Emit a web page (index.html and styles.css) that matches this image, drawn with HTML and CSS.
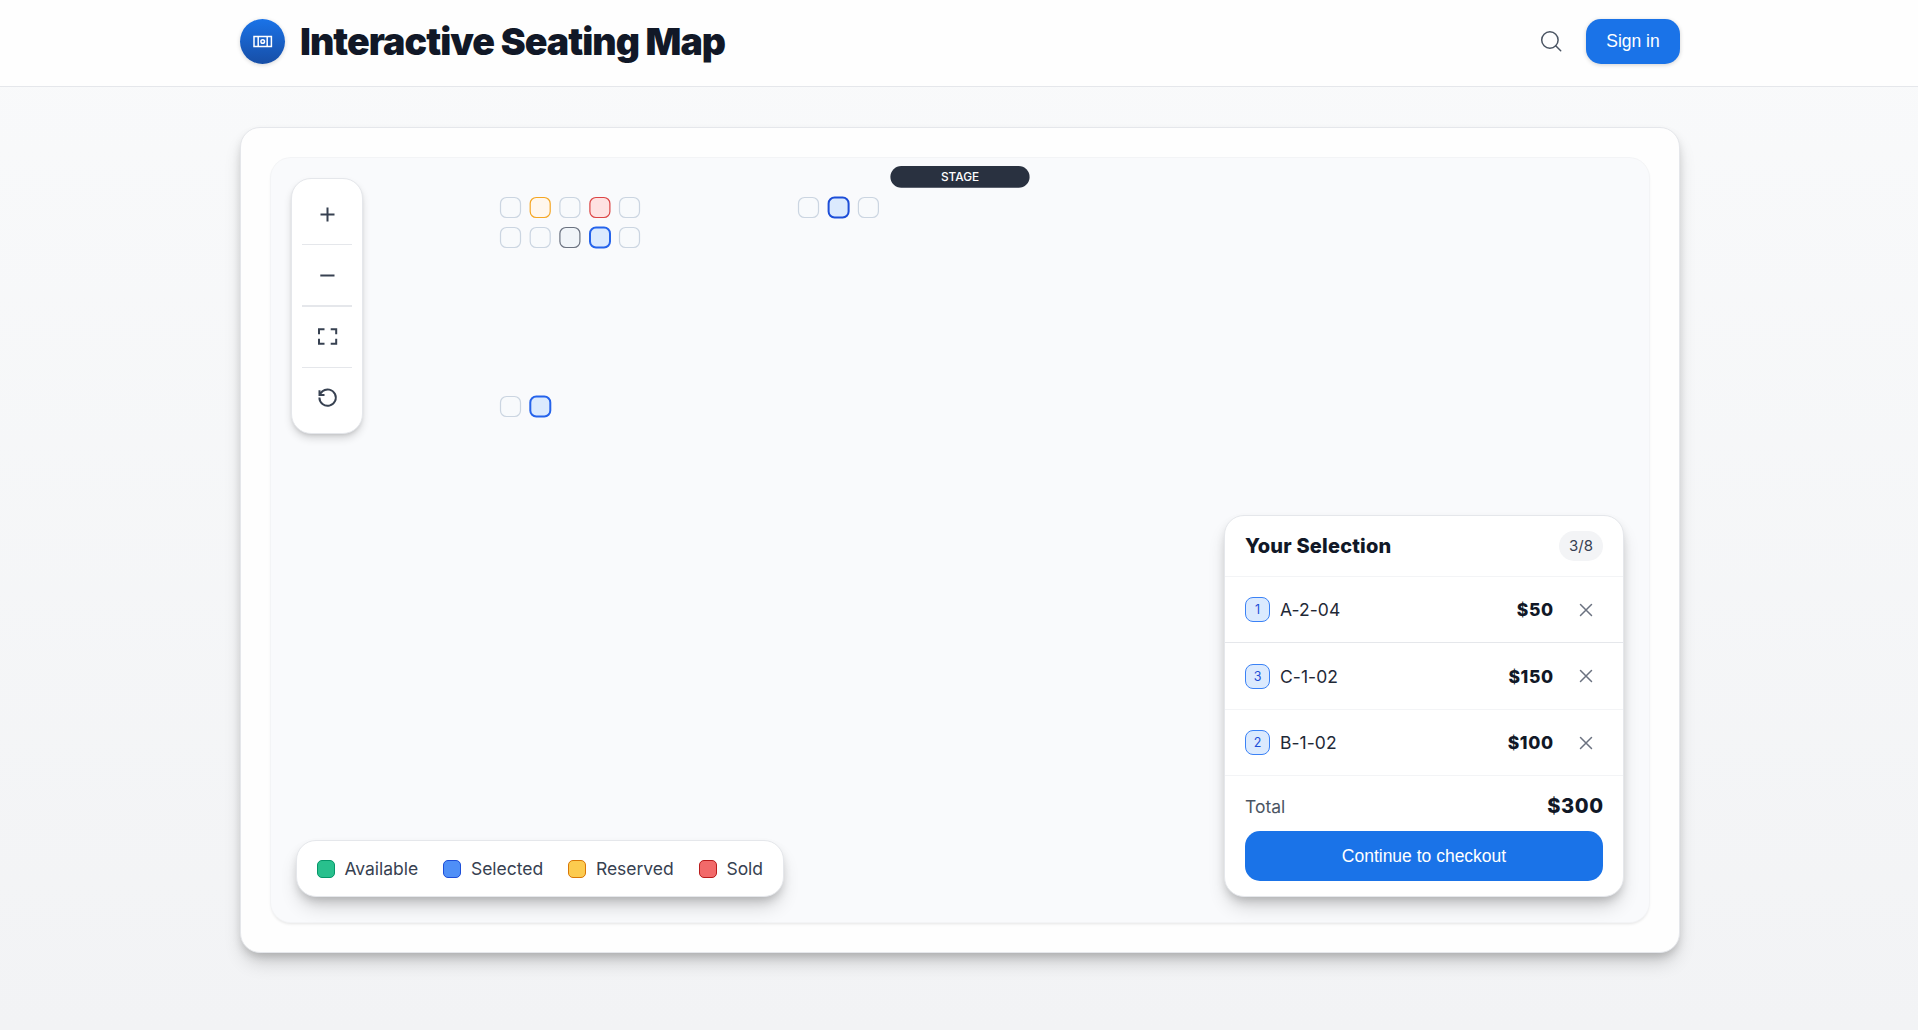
FILE: index.html
```html
<!DOCTYPE html>
<html lang="en">
<head>
<meta charset="utf-8">
<title>Interactive Seating Map</title>
<link rel="stylesheet" href="styles.css">
</head>
<body>
<header class="header">
  <div class="header-inner">
    <div class="logo">
      <svg width="20" height="20" viewBox="0 0 20 20" fill="none" stroke="#fff" stroke-width="1.5"><rect x="1" y="4.5" width="17.4" height="10"/><path d="M5.2 4.5v10M14.2 4.5v10"/><circle cx="9.7" cy="9.5" r="1.8"/></svg>
    </div>
    <h1 class="title">Interactive Seating Map</h1>
    <div class="actions">
      <svg width="22" height="22" viewBox="0 0 22 22" fill="none" stroke="#4b5563" stroke-width="1.5" stroke-linecap="round"><circle cx="9.9" cy="9" r="8.2"/><path d="M15.7 14.8l5 5"/></svg>
      <button class="button sign-in">Sign in</button>
    </div>
  </div>
</header>
<main class="card">
  <section class="map">
    <svg class="seats" width="1378" height="764" viewBox="271 158 1378 764">
      <g fill="#f8fafc" stroke="#cbd5e1" stroke-width="1.2">
        <rect x="500.5" y="197.5" width="20" height="20" rx="6"/>
        <rect x="559.9" y="197.5" width="20" height="20" rx="6"/>
        <rect x="619.5" y="197.5" width="20" height="20" rx="6"/>
        <rect x="500.5" y="227.5" width="20" height="20" rx="6"/>
        <rect x="530.2" y="227.5" width="20" height="20" rx="6"/>
        <rect x="619.5" y="227.5" width="20" height="20" rx="6"/>
        <rect x="798.5" y="197.5" width="20" height="20" rx="6"/>
        <rect x="858.4" y="197.5" width="20" height="20" rx="6"/>
        <rect x="500.5" y="396.5" width="20" height="20" rx="6"/>
      </g>
      <rect x="530.2" y="197.5" width="20" height="20" rx="6" fill="#fff7ed" stroke="#f5a623" stroke-width="1.2"/>
      <rect x="589.9" y="197.5" width="20" height="20" rx="6" fill="#fee2e2" stroke="#dc4545" stroke-width="1.2"/>
      <rect x="559.9" y="227.5" width="20" height="20" rx="6" fill="#f1f5f9" stroke="#6b7280" stroke-width="1.2"/>
      <g fill="#dbeafe" stroke="#2563eb" stroke-width="2">
        <rect x="590" y="227.5" width="20" height="20" rx="6"/>
        <rect x="530.3" y="396.5" width="20" height="20" rx="6"/>
        <rect x="828.6" y="197.5" width="20" height="20" rx="6" stroke="#1d4ed8"/>
      </g>
      <rect x="890.4" y="166" width="139.2" height="21.8" rx="10.9" fill="#293140"/>
      <text class="stage" x="960" y="181" text-anchor="middle">STAGE</text>
    </svg>
    <nav class="zoom panel">
      <button class="tool"><svg width="24" height="24" viewBox="0 0 24 24"><path d="M12.5 5.5v14M5.5 12.5h14"/></svg></button>
      <i class="divider"></i>
      <button class="tool"><svg width="24" height="24" viewBox="0 0 24 24"><path d="M5.3 12.5h14.2"/></svg></button>
      <i class="divider wide"></i>
      <button class="tool"><svg width="24" height="24" viewBox="0 0 24 24"><path d="M4 9.2V4.3h5.5M15.7 4.3h5.5v4.9M21.2 13.8v4.9h-5.5M9.5 18.7H4v-4.9"/></svg></button>
      <i class="divider"></i>
      <button class="tool"><svg width="24" height="24" viewBox="0 0 24 24"><path d="M4.4 11.6a8.2 8.2 0 1 0 3-6.3L4.5 8.6M4.5 4.2v4.8h5"/></svg></button>
    </nav>
    <div class="legend panel">
      <span class="key"><i class="swatch available"></i>Available</span>
      <span class="key"><i class="swatch selected"></i>Selected</span>
      <span class="key"><i class="swatch reserved"></i>Reserved</span>
      <span class="key"><i class="swatch sold"></i>Sold</span>
    </div>
    <aside class="selection panel">
      <div class="selection-head"><h2>Your Selection</h2><span class="count">3/8</span></div>
      <div class="row first"><span class="tier">1</span><span class="seat">A-2-04</span><b>$50</b><svg class="remove" width="14" height="14" viewBox="0 0 14 14"><path d="M1.5 1.5l11 11M12.5 1.5l-11 11"/></svg></div>
      <div class="row"><span class="tier">3</span><span class="seat">C-1-02</span><b>$150</b><svg class="remove" width="14" height="14" viewBox="0 0 14 14"><path d="M1.5 1.5l11 11M12.5 1.5l-11 11"/></svg></div>
      <div class="row last"><span class="tier">2</span><span class="seat">B-1-02</span><b>$100</b><svg class="remove" width="14" height="14" viewBox="0 0 14 14"><path d="M1.5 1.5l11 11M12.5 1.5l-11 11"/></svg></div>
      <div class="checkout">
        <div class="total"><span>Total</span><strong>$300</strong></div>
        <button class="button continue">Continue to checkout</button>
      </div>
    </aside>
  </section>
</main>
</body>
</html>
```

FILE: styles.css
```css
* { box-sizing: border-box; }
body {
  margin: 0;
  height: 1030px;
  overflow: hidden;
  background: linear-gradient(#f9fafb, #f2f3f5);
  font-family: Inter, sans-serif;
  font-size: 17.5px;
  color: #111827;
}
button { border: 0; padding: 0; }
.header { height: 87px; background: #fefefe; border-bottom: 1px solid #e5e7eb; padding-left: 240px; }
.header-inner { width: 1440px; height: 83px; display: flex; align-items: center; }
.logo {
  width: 45px; height: 45px; border-radius: 50%;
  display: flex; align-items: center; justify-content: center;
  background: linear-gradient(#1a73e8, #174ea6);
  box-shadow: 0 1px 4px rgba(0,0,0,.16);
}
.title { margin: 0 0 0 15px; font-size: 37.5px; line-height: 45px; font-weight: 900; letter-spacing: -0.97px; white-space: nowrap; }
.actions { margin-left: auto; display: flex; align-items: center; gap: 24px; }
.button { font: 17.5px "Liberation Sans", Arial, sans-serif; color: #fff; background: #1a73e8; border-radius: 15px; }
.sign-in { width: 94px; height: 45px; box-shadow: 0 1px 4px rgba(0,0,0,.18); }
.card {
  width: 1440px; height: 826px; margin: 40px 0 0 240px; padding: 30px;
  border: 1px solid #e5e7eb; border-radius: 20px; background: #fefefe;
  box-shadow: 0 12px 19px -4px rgba(0,0,0,.19), 0 5px 10px -2px rgba(0,0,0,.17);
}
.map { position: relative; height: 764px; border-radius: 20px; background: #f9fafc; box-shadow: 0 0 0 1px #f3f4f6, 0 2px 3px rgba(0,0,0,.1); }
.seats { display: block; }
.stage { font-size: 11.8px; font-weight: 550; fill: #fff; }
.panel { position: absolute; background: #fff; border: 1px solid #e5e7eb; border-radius: 20px; }
.zoom {
  left: 20px; top: 20px; width: 72px; height: 256px; padding: 10px;
  display: flex; flex-direction: column; align-items: center; gap: 5px;
  box-shadow: 0 5px 8px -1px rgba(0,0,0,.16), 0 2px 4px -2px rgba(0,0,0,.16);
}
.tool { width: 50px; height: 50px; flex: none; background: none; display: flex; align-items: center; justify-content: center; }
.tool svg { fill: none; stroke: #374151; stroke-width: 2; }
.divider { width: 50px; height: 1px; flex: none; background: #e5e7eb; }
.divider.wide { height: 2px; }
.legend {
  left: 25px; bottom: 25px; width: 488px; height: 57px; padding: 0 20px;
  display: flex; align-items: center; justify-content: space-between;
  color: #374151; box-shadow: 0 12px 19px -4px rgba(0,0,0,.19), 0 5px 10px -2px rgba(0,0,0,.17);
}
.key { display: flex; align-items: center; gap: 9.5px; letter-spacing: -.03px; }
.swatch { width: 18px; height: 18px; border-radius: 5px; border: 1px solid; }
.available { background: #28c08d; border-color: #059669; }
.selected { background: #4f8ff7; border-color: #1d4ed8; }
.reserved { background: #fccb4f; border-color: #d97706; }
.sold { background: #f26a6a; border-color: #b91c1c; }
.selection {
  right: 25px; bottom: 25px; width: 400px; height: 382px;
  box-shadow: 0 12px 19px -4px rgba(0,0,0,.19), 0 5px 10px -2px rgba(0,0,0,.17);
}
.selection-head { height: 61px; padding: 0 20px; display: flex; align-items: center; justify-content: space-between; border-bottom: 1px solid #f3f4f6; }
.selection-head h2 { margin: 0; font-size: 20px; font-weight: 800; letter-spacing: .2px; }
.count { width: 44px; height: 30px; border-radius: 15px; background: #f3f4f6; color: #374151; font-size: 15px; line-height: 30px; text-align: center; }
.row { height: 67px; padding: 0 30px 0 20px; display: flex; align-items: center; border-bottom: 1px solid #f3f4f6; }
.row.first { height: 66px; border-bottom-color: #e5e7eb; }
.row.last { height: 66px; }
.tier { width: 25px; height: 25px; border: 1px solid #3b82f6; border-radius: 8px; background: #dbeafe; color: #1d4ed8; font-size: 12.5px; line-height: 23px; text-align: center; }
.seat { margin-left: 10px; flex: 1; color: #1f2937; letter-spacing: .05px; }
.row b { font-weight: 800; letter-spacing: .6px; margin-right: 25.4px; }
.remove { fill: none; stroke: #6b7280; stroke-width: 1.5; stroke-linecap: round; }
.checkout { padding: 15px 20px 0; }
.total { height: 29px; display: flex; align-items: center; justify-content: space-between; color: #4b5563; }
.total strong { font-size: 20px; font-weight: 800; letter-spacing: .6px; margin-right: -.6px; color: #111827; }
.total span { padding-top: 1px; }
.continue { display: block; width: 358px; height: 50px; margin-top: 11px; }
```
